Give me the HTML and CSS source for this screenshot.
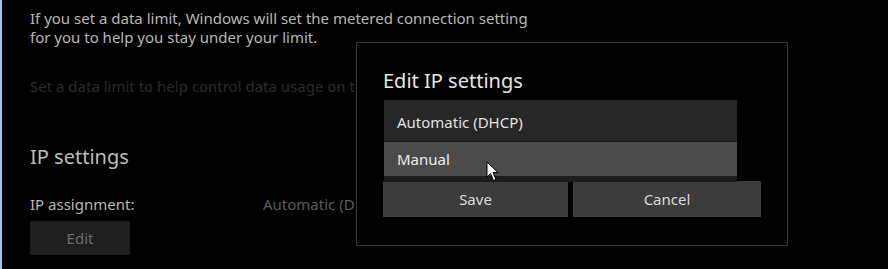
FILE: index.html
```html
<!DOCTYPE html>
<html lang="en">
<head>
  <meta charset="UTF-8">
  <title>Network settings - Edit IP settings</title>
  <link rel="stylesheet" href="styles.css">
</head>
<body>
  <div class="page">
    <div class="settings">
      <p class="intro">If you set a data limit, Windows will set the metered connection setting<br>for you to help you stay under your limit.</p>
      <p class="hint">Set a data limit to help control data usage on th</p>

      <h2 class="section-title">IP settings</h2>
      <div class="prop-row">
        <span class="prop-label">IP assignment:</span>
        <span class="prop-value">Automatic (D</span>
      </div>
      <button class="edit-btn">Edit</button>
    </div>

    <div class="dialog">
      <div class="dialog-title">Edit IP settings</div>
      <div class="field">
        <ul class="popup">
          <li class="option">Automatic (DHCP)</li>
          <li class="option hover">Manual</li>
        </ul>
        <svg class="cursor" width="14" height="22" viewBox="0 0 14 22">
          <path d="M1 1 L1 16 L4.5 12.5 L7.5 19.5 L10 18.5 L7 11.5 L12 11.5 Z" fill="#fff" stroke="#000" stroke-width="1"/>
        </svg>
      </div>
      <div class="dialog-buttons">
        <button class="dlg-btn">Save</button>
        <button class="dlg-btn">Cancel</button>
      </div>
    </div>
  </div>
</body>
</html>
```

FILE: styles.css
```css
* {
  margin: 0;
  padding: 0;
  box-sizing: border-box;
}

body {
  background: #000;
  font-family: "Noto Sans", "Open Sans", sans-serif;
  overflow: hidden;
}

.page {
  position: relative;
  height: 269px;
  border-left: 2px solid #9cc8e6;
}

.settings {
  padding: 9px 0 0 28px;
}

.intro {
  font-size: 15px;
  line-height: 19px;
  color: #b8b8b8;
}

.hint {
  margin-top: 30px;
  font-size: 15px;
  line-height: 19px;
  color: #2c2c2c;
  white-space: nowrap;
}

.section-title {
  margin-top: 47px;
  font-size: 20px;
  font-weight: 400;
  line-height: 28px;
  color: #bcbcbc;
}

.prop-row {
  display: flex;
  margin-top: 24px;
  font-size: 15px;
  line-height: 19px;
}

.prop-label {
  width: 233px;
  color: #b8b8b8;
}

.prop-value {
  white-space: nowrap;
  color: #5c5c5c;
}

.edit-btn {
  display: block;
  margin-top: 7px;
  width: 100px;
  height: 34px;
  border: 0;
  background: #1e1e1e;
  color: #6c6c6c;
  font-family: inherit;
  font-size: 15px;
}

/* dialog overlay */
.dialog {
  position: absolute;
  left: 354px;
  top: 42px;
  width: 432px;
  height: 204px;
  background: #000;
  border: 1px solid #3b3b3b;
  padding: 24px 26px 0 26px;
}

.dialog-title {
  font-size: 20px;
  line-height: 28px;
  color: #e6e6e6;
}

.field {
  position: relative;
  height: 86px;
}

.popup {
  position: absolute;
  left: 1px;
  top: 5px;
  width: 353px;
  list-style: none;
  background: #1c1c1c;
  padding-bottom: 6px;
  z-index: 2;
}

.option {
  height: 41px;
  padding: 4px 0 0 13px;
  font-size: 15px;
  line-height: 37px;
  color: #e2e2e2;
  background: #272727;
}

.option.hover {
  height: 35px;
  padding-top: 0;
  line-height: 34px;
  background: #4b4b4b;
  color: #ececec;
  border-top: 1px solid #1c1c1c;
}

.cursor {
  position: absolute;
  left: 103px;
  top: 66px;
  z-index: 3;
}

.dialog-buttons {
  display: grid;
  grid-template-columns: 185px 188px;
  column-gap: 5px;
}

.dlg-btn {
  height: 36px;
  border: 0;
  background: #3c3c3c;
  color: #dadada;
  font-family: inherit;
  font-size: 15px;
}
```
